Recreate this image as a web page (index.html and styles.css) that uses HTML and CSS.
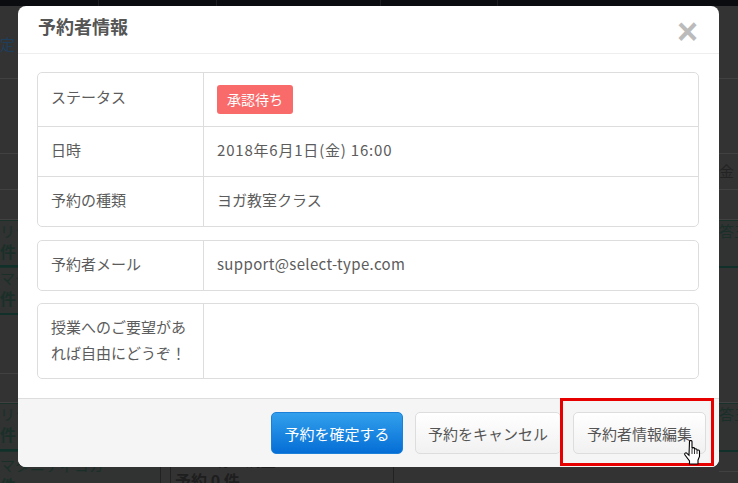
FILE: index.html
```html
<!DOCTYPE html>
<html lang="ja">
<head>
    <meta charset="UTF-8">
    <meta name="viewport" content="width=device-width, initial-scale=1.0">
    <title>予約者情報</title>
    <link rel="stylesheet" href="styles.css">
</head>
<body>
    <!-- 暗くなった背面のカレンダー -->
    <div class="backdrop">
        <div class="top-bar">
            <span></span><span></span><span></span><span></span>
        </div>
        <div class="calendar">
            <div class="col col-left">
                <div class="cell blue">定</div>
                <div class="cell"></div>
                <div class="cell"></div>
                <div class="cell"></div>
                <div class="cell green">リラ<br><b>件</b></div>
                <div class="cell green">マタ<br><b>件</b></div>
                <div class="cell"></div>
                <div class="cell"></div>
                <div class="cell green">リラ<br><b>件</b></div>
                <div class="cell green">マタニティヨガ<br><b>件</b></div>
            </div>
            <div class="col col-mid">
                <div class="cell green">16:00 骨盤調整ヨガ<br><b>予約 0 件</b></div>
            </div>
            <div class="col col-right">
                <div class="cell"></div>
                <div class="cell"></div>
                <div class="cell">金</div>
                <div class="cell"></div>
                <div class="cell green">答三</div>
                <div class="cell"></div>
                <div class="cell green">答三</div>
                <div class="cell"></div>
            </div>
        </div>
    </div>

    <div class="modal">
        <div class="modal-header">
            <h2>予約者情報</h2>
            <span class="close">×</span>
        </div>
        <div class="modal-body">
            <table class="info-table">
                <tr class="row-status">
                    <th>ステータス</th>
                    <td><span class="badge">承認待ち</span></td>
                </tr>
                <tr class="row-date">
                    <th>日時</th>
                    <td>2018年6月1日(金) 16:00</td>
                </tr>
                <tr class="row-kind">
                    <th>予約の種類</th>
                    <td>ヨガ教室クラス</td>
                </tr>
            </table>
            <table class="info-table">
                <tr class="row-mail">
                    <th>予約者メール</th>
                    <td>support@select-type.com</td>
                </tr>
            </table>
            <table class="info-table">
                <tr class="row-note">
                    <th>授業へのご要望があれば自由にどうぞ！</th>
                    <td></td>
                </tr>
            </table>
        </div>
        <div class="modal-footer">
            <button class="btn btn-primary">予約を確定する</button>
            <button class="btn btn-cancel">予約をキャンセル</button>
            <button class="btn btn-edit">予約者情報編集</button>
        </div>
    </div>

    <div class="highlight"></div>

    <svg class="cursor" width="17" height="25" viewBox="0 0 17 25">
        <path d="M5.500 1.500c0-1.300 2.500-1.300 2.500 0v7c.3-1.200 2.500-1.200 2.500 0v1c.3-1 2.300-1 2.500 .3v.7c.4-.8 2.500-.7 2.500 .7v5.300l-1.500 3.500v4h-8.500v-3l-4.500-6c-1-1.500.8-3 2-1.700l2 2z" fill="#fff" stroke="#000" stroke-width="1.100"/>
        <path d="M8 9v5M10.500 9.500v4.500M13 10.500v3.500" fill="none" stroke="#000" stroke-width=".8"/>
    </svg>
</body>
</html>
```

FILE: styles.css
```css
* {
    box-sizing: border-box;
}
html, body {
    margin: 0;
    height: 100%;
}
body {
    position: relative;
    overflow: hidden;
    background: #333;
    color: #555;
    font-family: "Noto Sans CJK JP", "Noto Sans", sans-serif;
    font-size: 15px;
}

/* backdrop */
.backdrop {
    height: 100%;
    display: flex;
    flex-direction: column;
}
.top-bar {
    height: 6px;
    flex: none;
    display: flex;
    background: #0a0c10;
}
.top-bar span {
    width: 99px;
    border-right: 1px solid #1c1e22;
}
.top-bar span:nth-child(2) {
    width: 118px;
}
.top-bar span:nth-child(3) {
    width: 164px;
}
.top-bar span:nth-child(4) {
    width: 117px;
}
.calendar {
    flex: 1;
    display: flex;
    overflow: hidden;
}
.col {
    flex: none;
    display: grid;
    align-content: start;
}
.col-left {
    width: 161px;
    border-right: 1px solid #222;
    grid-template-rows: 73px 75px 36px 30px 47px 48px 59px 29px 48px 48px;
}
.col-left .cell:last-child {
    padding-top: 3px;
}
.col-mid {
    width: 224px;
    margin-left: 9px;
    padding-top: 444px;
    padding-left: 4px;
    border-left: 1px solid #222;
    border-right: 1px solid #222;
}
.col-right {
    width: 19px;
    margin-left: 325px;
    grid-template-rows: 73px 75px 36px 30px 48px 135px 49px 20px;
}
.cell {
    border-bottom: 1px solid #414141;
    color: #232323;
    font-size: 15px;
    line-height: 20px;
    white-space: nowrap;
    overflow: hidden;
}
.cell.blue {
    padding-top: 28px;
    color: #1d3f5c;
}
.cell.green {
    border-top: 1px solid #1a302a;
    border-bottom: 2px solid #12302a;
    background: #303332;
    color: #1b2f29;
}
.col-right .cell:nth-child(3) {
    padding-top: 7px;
}
.col-mid .cell {
    border: none;
    background: none;
    color: #1e1e1e;
}
.cell b {
    font-size: 16px;
}

/* modal */
.modal {
    position: absolute;
    left: 18px;
    top: 6px;
    width: 701px;
    height: 461px;
    display: flex;
    flex-direction: column;
    background: #fff;
    border-radius: 8px;
    overflow: hidden;
}
.modal-header {
    height: 48px;
    flex: none;
    display: flex;
    align-items: center;
    justify-content: space-between;
    padding: 0 21px 0 20px;
    border-bottom: 1px solid #eee;
}
.modal-header h2 {
    margin: 0 0 8px;
    font-size: 18px;
    font-weight: 700;
    color: #555;
}
.close {
    font-family: "Liberation Sans", sans-serif;
    font-size: 36px;
    font-weight: 700;
    line-height: 1;
    color: #bbb;
    margin-top: 5px;
}
.modal-body {
    flex: 1;
    display: flex;
    flex-direction: column;
    gap: 12px;
    padding: 18px 20px 0 19px;
}
.info-table {
    width: 662px;
    flex: none;
    border: 1px solid #ddd;
    border-radius: 5px;
    border-spacing: 0;
    table-layout: fixed;
}
.info-table:first-child {
    margin-bottom: 1px;
}
.info-table th,
.info-table td {
    padding: 0 13px 3px;
    font-weight: 400;
    text-align: left;
    line-height: 26px;
    color: #5c5c5c;
}
.info-table th {
    width: 166px;
    border-right: 1px solid #ddd;
}
.info-table tr + tr th,
.info-table tr + tr td {
    border-top: 1px solid #ddd;
}
.row-status th,
.row-status td {
    height: 53px;
}
.row-status th {
    padding-bottom: 6px;
}
.row-status td {
    padding-bottom: 0;
}
.row-date th,
.row-date td {
    height: 50px;
}
.row-date td {
    letter-spacing: .8px;
}
.row-kind th,
.row-kind td {
    height: 50px;
}
.row-mail th,
.row-mail td {
    height: 49px;
}
.row-mail td {
    letter-spacing: .35px;
}
.row-note th,
.row-note td {
    height: 74px;
}
.badge {
    display: inline-block;
    width: 76px;
    height: 29px;
    line-height: 29px;
    text-align: center;
    background: #f96b6b;
    color: #fff;
    border-radius: 3px;
    font-size: 14px;
    vertical-align: middle;
}
.modal-footer {
    height: 69px;
    flex: none;
    display: flex;
    justify-content: flex-end;
    align-items: flex-start;
    gap: 12px;
    padding: 13px 13px 0 0;
    background: #f5f5f5;
    border-top: 1px solid #ddd;
}
.btn {
    height: 42px;
    padding: 0;
    border: 1px solid #ddd;
    border-radius: 5px;
    background: linear-gradient(#fff, #f1f1f1);
    color: #555;
    font-family: inherit;
    font-size: 15px;
    white-space: nowrap;
}
.btn-primary {
    width: 132px;
    border-color: #1a80d8;
    background: linear-gradient(#32a0ec, #056ed6);
    color: #fff;
}
.btn-cancel {
    width: 146px;
}
.btn-edit {
    width: 133px;
}

/* annotation over the screenshot */
.highlight {
    position: absolute;
    left: 560px;
    top: 398px;
    width: 154px;
    height: 68px;
    border: 3px solid #e60000;
}
.cursor {
    position: absolute;
    left: 684px;
    top: 440px;
}
```
